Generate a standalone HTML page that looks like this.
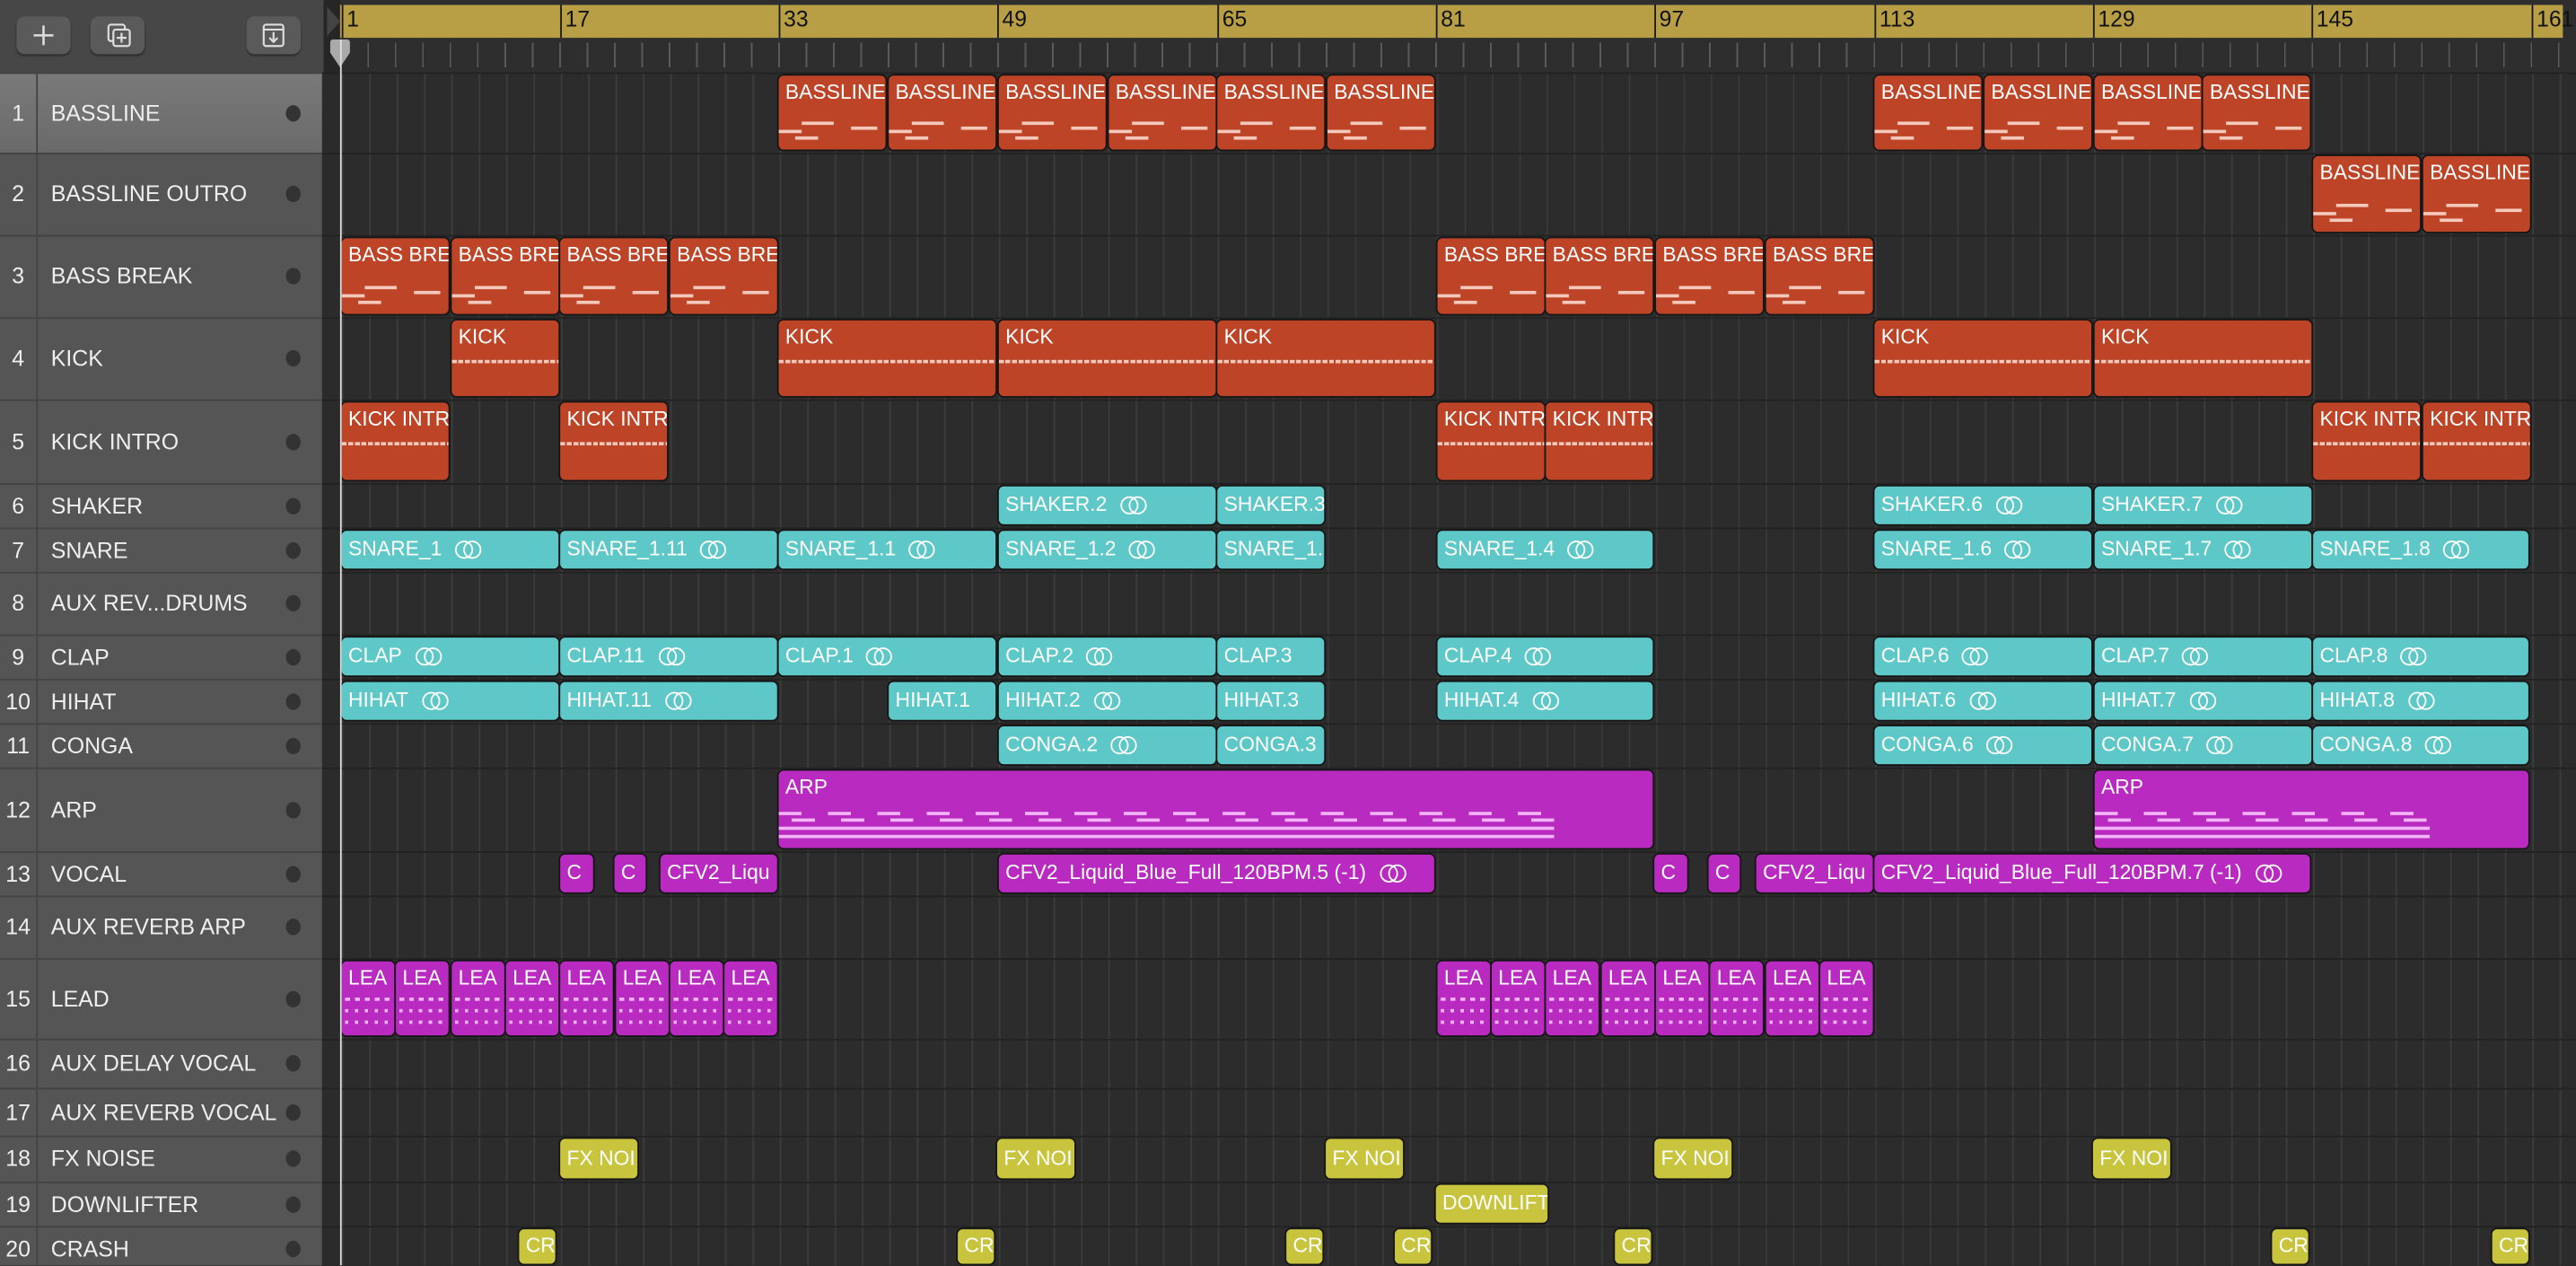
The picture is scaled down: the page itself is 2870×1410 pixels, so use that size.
<!DOCTYPE html>
<html><head><meta charset="utf-8"><style>
html,body{margin:0;padding:0;background:#2a2a2a;overflow:hidden;width:2870px;height:1410px}
#w{position:absolute;left:0;top:0;width:1568px;height:770px;transform:scale(1.830357);transform-origin:0 0;font-family:"Liberation Sans",sans-serif;background:#2b2b2b;overflow:hidden}
#top{position:absolute;left:0;top:0;width:197px;height:44px;background:#474747;border-bottom:1px solid #333}
.btn{position:absolute;top:10px;height:23px;width:33px;background:#5a5a5a;border-radius:5px;box-shadow:0 1px 1px #2e2e2e}
#ruler{position:absolute;left:197px;top:0;width:1371px;height:44px;background:#2e2e2e}
#yb{position:absolute;left:10px;top:3px;width:1353px;height:20px;background:#b89f45}
.bn{position:absolute;top:3px;height:20px;border-left:1px solid #1a1a1a;font-size:13.5px;line-height:17px;padding-left:2px;color:#111}
#ticks{position:absolute;left:10px;top:23px;width:1353px;height:21px;background:repeating-linear-gradient(90deg,#5a5a5a 0 1px,transparent 1px 16.667px);background-size:100% 15px;background-repeat:repeat-x;background-position:0 3px}
.row{position:absolute;left:0;width:1568px;box-shadow:inset 0 1px 0 #222}
.h{position:absolute;left:0;top:0;width:196px;height:100%;background:#555;color:#eee;font-size:13.6px;box-shadow:inset 0 1px 0 #444}
.h .n{position:absolute;left:0;width:22px;text-align:center;top:50%;transform:translateY(-50%)}
.h .nm{position:absolute;left:31px;top:50%;transform:translateY(-50%);white-space:nowrap}
.h .d{position:absolute;left:174px;top:50%;width:9px;height:10px;margin-top:-5px;border-radius:50%;background:#333}
.h .nl{position:absolute;left:22px;top:0;bottom:0;border-left:1px solid #444}
.ln{position:absolute;left:207px;right:5px;top:1px;bottom:0;background:#2c2c2c repeating-linear-gradient(90deg,#3b3b3b 0 1px,transparent 1px 16.667px);background-position:1px 0}
.r{position:absolute;top:1px;bottom:1px;margin-left:-1px;border:1px solid #161616;border-radius:4px;box-sizing:border-box;color:#fff;font-size:12.5px;padding:3px 0 0 4px;white-space:nowrap;overflow:hidden;line-height:14px}
.o{background:#bd4427}.c{background:#5ec7c7}.m{background:#b82ac0}.y{background:#c9c43d;color:#fff}
.c,.y,.vm{padding-top:0;display:flex;align-items:center;padding-bottom:1px}
.lp{display:inline-block;position:relative;width:17px;height:10px;margin-left:8px;vertical-align:middle}
.lp:before,.lp:after{content:"";position:absolute;top:0;width:9px;height:9px;border:1.2px solid #fff;border-radius:50%}
.lp:before{left:0}.lp:after{left:5px}
.bs:after{content:"";position:absolute;left:0;right:0;bottom:6px;height:12px;background:
linear-gradient(#f4c8ba,#f4c8ba) 0 6px/22% 2px no-repeat,
linear-gradient(#f4c8ba,#f4c8ba) 30% 1px/30% 2px no-repeat,
linear-gradient(#f4c8ba,#f4c8ba) 90% 4px/25% 2px no-repeat,
linear-gradient(#f4c8ba,#f4c8ba) 20% 10px/22% 2px no-repeat}
.kk:after{content:"";position:absolute;left:0;right:0;top:24px;height:2px;background:repeating-linear-gradient(90deg,#f4c8ba 0 3px,transparent 3px 4px)}
.ld:after{content:"";position:absolute;left:2px;right:2px;top:22px;height:17px;background:
repeating-linear-gradient(90deg,#f2b4f6 0 3px,transparent 3px 6px) 0 0/100% 2px no-repeat,
repeating-linear-gradient(90deg,#f2b4f6 0 2px,transparent 2px 6px) 0 7px/100% 2px no-repeat,
repeating-linear-gradient(90deg,#f2b4f6 0 2px,transparent 2px 6px) 0 14px/100% 2px no-repeat}
.ap:after{content:"";position:absolute;left:0;right:60px;top:25px;height:17px;background:
repeating-linear-gradient(90deg,#f2b4f6 0 14px,transparent 14px 30px) 0 0/100% 2px no-repeat,
repeating-linear-gradient(90deg,transparent 0 8px,#f2b4f6 8px 22px,transparent 22px 30px) 0 4px/100% 2px no-repeat,
linear-gradient(#f2b4f6,#f2b4f6) 0 9px/100% 2px no-repeat,
linear-gradient(#f2b4f6,#f2b4f6) 0 14px/100% 2px no-repeat}
#ph{position:absolute;left:207px;top:24px;width:1px;height:746px;background:#ddd}
</style></head><body><div id="w">
<div id="top">
<div class="btn" style="left:10px"><svg width="33" height="23"><path d="M16.5 5.5v12M10.5 11.5h12" stroke="#ddd" stroke-width="1.4"/></svg></div>
<div class="btn" style="left:55px"><svg width="33" height="23"><rect x="11" y="5" width="10" height="10" rx="1.5" fill="none" stroke="#ddd" stroke-width="1.2"/><rect x="14" y="8" width="10" height="10" rx="1.5" fill="#5a5a5a" stroke="#ddd" stroke-width="1.2"/><path d="M19 10v6M16 13h6" stroke="#ddd" stroke-width="1.2"/></svg></div>
<div class="btn" style="left:150px"><svg width="33" height="23"><rect x="10.5" y="5" width="12" height="13" rx="1.5" fill="none" stroke="#ddd" stroke-width="1.2"/><path d="M10.5 8h12M16.5 9.5v6M14 13l2.5 2.5 2.5-2.5" stroke="#ddd" stroke-width="1.2" fill="none"/></svg></div>
</div>
<div id="ruler">
<div style="position:absolute;left:0;top:0;width:10px;height:44px;background:#262626"></div>
<svg style="position:absolute;left:2px;top:4px" width="9" height="18"><path d="M0 0L8 9L0 18Z" fill="#444"/></svg>
<div id="yb"></div>
<div id="ticks"></div>
<div class="bn" style="left:11px">1</div><div class="bn" style="left:144px">17</div><div class="bn" style="left:277px">33</div><div class="bn" style="left:410px">49</div><div class="bn" style="left:544px">65</div><div class="bn" style="left:677px">81</div><div class="bn" style="left:810px">97</div><div class="bn" style="left:944px">113</div><div class="bn" style="left:1077px">129</div><div class="bn" style="left:1210px">145</div><div class="bn" style="left:1344px">161</div>
<svg style="position:absolute;left:3px;top:24px" width="14" height="18"><path d="M1 2Q1 0 3 0H11Q13 0 13 2V8L7 17L1 8Z" fill="#aaa"/></svg>
</div>

<div class="row" style="top:44px;height:49px"><div class="h" style="background:linear-gradient(#7a7a7a,#6a6a6a)"><span class="n">1</span><span class="nl"></span><span class="nm">BASSLINE</span><span class="d"></span></div><div class="ln"></div>
<div class="r o bs" style="left:474px;width:67px">BASSLINE</div><div class="r o bs" style="left:541px;width:67px">BASSLINE</div><div class="r o bs" style="left:608px;width:67px">BASSLINE</div><div class="r o bs" style="left:675px;width:67px">BASSLINE</div><div class="r o bs" style="left:741px;width:67px">BASSLINE</div><div class="r o bs" style="left:808px;width:67px">BASSLINE</div>
<div class="r o bs" style="left:1141px;width:67px">BASSLINE</div><div class="r o bs" style="left:1208px;width:67px">BASSLINE</div><div class="r o bs" style="left:1275px;width:67px">BASSLINE</div><div class="r o bs" style="left:1341px;width:67px">BASSLINE</div></div>

<div class="row" style="top:93px;height:50px"><div class="h"><span class="n">2</span><span class="nl"></span><span class="nm">BASSLINE OUTRO</span><span class="d"></span></div><div class="ln"></div>
<div class="r o bs" style="left:1408px;width:67px">BASSLINE</div><div class="r o bs" style="left:1475px;width:67px">BASSLINE</div></div>

<div class="row" style="top:143px;height:50px"><div class="h"><span class="n">3</span><span class="nl"></span><span class="nm">BASS BREAK</span><span class="d"></span></div><div class="ln"></div>
<div class="r o bs" style="left:208px;width:67px">BASS BRE</div><div class="r o bs" style="left:275px;width:67px">BASS BRE</div><div class="r o bs" style="left:341px;width:67px">BASS BRE</div><div class="r o bs" style="left:408px;width:67px">BASS BRE</div>
<div class="r o bs" style="left:875px;width:67px">BASS BRE</div><div class="r o bs" style="left:941px;width:67px">BASS BRE</div><div class="r o bs" style="left:1008px;width:67px">BASS BRE</div><div class="r o bs" style="left:1075px;width:67px">BASS BRE</div></div>

<div class="row" style="top:193px;height:50px"><div class="h"><span class="n">4</span><span class="nl"></span><span class="nm">KICK</span><span class="d"></span></div><div class="ln"></div>
<div class="r o kk" style="left:275px;width:67px">KICK</div><div class="r o kk" style="left:474px;width:134px">KICK</div><div class="r o kk" style="left:608px;width:134px">KICK</div><div class="r o kk" style="left:741px;width:134px">KICK</div><div class="r o kk" style="left:1141px;width:134px">KICK</div><div class="r o kk" style="left:1275px;width:134px">KICK</div></div>

<div class="row" style="top:243px;height:51px"><div class="h"><span class="n">5</span><span class="nl"></span><span class="nm">KICK INTRO</span><span class="d"></span></div><div class="ln"></div>
<div class="r o kk" style="left:208px;width:67px">KICK INTR</div><div class="r o kk" style="left:341px;width:67px">KICK INTR</div><div class="r o kk" style="left:875px;width:67px">KICK INTR</div><div class="r o kk" style="left:941px;width:67px">KICK INTR</div><div class="r o kk" style="left:1408px;width:67px">KICK INTR</div><div class="r o kk" style="left:1475px;width:67px">KICK INTR</div></div>

<div class="row" style="top:294px;height:27px"><div class="h"><span class="n">6</span><span class="nl"></span><span class="nm">SHAKER</span><span class="d"></span></div><div class="ln"></div>
<div class="r c" style="left:608px;width:134px">SHAKER.2<span class="lp"></span></div><div class="r c" style="left:741px;width:67px">SHAKER.3</div><div class="r c" style="left:1141px;width:134px">SHAKER.6<span class="lp"></span></div><div class="r c" style="left:1275px;width:134px">SHAKER.7<span class="lp"></span></div></div>

<div class="row" style="top:321px;height:27px"><div class="h"><span class="n">7</span><span class="nl"></span><span class="nm">SNARE</span><span class="d"></span></div><div class="ln"></div>
<div class="r c" style="left:208px;width:134px">SNARE_1<span class="lp"></span></div><div class="r c" style="left:341px;width:134px">SNARE_1.11<span class="lp"></span></div><div class="r c" style="left:474px;width:134px">SNARE_1.1<span class="lp"></span></div><div class="r c" style="left:608px;width:134px">SNARE_1.2<span class="lp"></span></div><div class="r c" style="left:741px;width:67px">SNARE_1.</div><div class="r c" style="left:875px;width:133px">SNARE_1.4<span class="lp"></span></div><div class="r c" style="left:1141px;width:134px">SNARE_1.6<span class="lp"></span></div><div class="r c" style="left:1275px;width:134px">SNARE_1.7<span class="lp"></span></div><div class="r c" style="left:1408px;width:133px">SNARE_1.8<span class="lp"></span></div></div>

<div class="row" style="top:348px;height:38px"><div class="h"><span class="n">8</span><span class="nl"></span><span class="nm">AUX REV...DRUMS</span><span class="d"></span></div><div class="ln"></div></div>

<div class="row" style="top:386px;height:27px"><div class="h"><span class="n">9</span><span class="nl"></span><span class="nm">CLAP</span><span class="d"></span></div><div class="ln"></div>
<div class="r c" style="left:208px;width:134px">CLAP<span class="lp"></span></div><div class="r c" style="left:341px;width:134px">CLAP.11<span class="lp"></span></div><div class="r c" style="left:474px;width:134px">CLAP.1<span class="lp"></span></div><div class="r c" style="left:608px;width:134px">CLAP.2<span class="lp"></span></div><div class="r c" style="left:741px;width:67px">CLAP.3</div><div class="r c" style="left:875px;width:133px">CLAP.4<span class="lp"></span></div><div class="r c" style="left:1141px;width:134px">CLAP.6<span class="lp"></span></div><div class="r c" style="left:1275px;width:134px">CLAP.7<span class="lp"></span></div><div class="r c" style="left:1408px;width:133px">CLAP.8<span class="lp"></span></div></div>

<div class="row" style="top:413px;height:27px"><div class="h"><span class="n">10</span><span class="nl"></span><span class="nm">HIHAT</span><span class="d"></span></div><div class="ln"></div>
<div class="r c" style="left:208px;width:134px">HIHAT<span class="lp"></span></div><div class="r c" style="left:341px;width:134px">HIHAT.11<span class="lp"></span></div><div class="r c" style="left:541px;width:67px">HIHAT.1</div><div class="r c" style="left:608px;width:134px">HIHAT.2<span class="lp"></span></div><div class="r c" style="left:741px;width:67px">HIHAT.3</div><div class="r c" style="left:875px;width:133px">HIHAT.4<span class="lp"></span></div><div class="r c" style="left:1141px;width:134px">HIHAT.6<span class="lp"></span></div><div class="r c" style="left:1275px;width:134px">HIHAT.7<span class="lp"></span></div><div class="r c" style="left:1408px;width:133px">HIHAT.8<span class="lp"></span></div></div>

<div class="row" style="top:440px;height:27px"><div class="h"><span class="n">11</span><span class="nl"></span><span class="nm">CONGA</span><span class="d"></span></div><div class="ln"></div>
<div class="r c" style="left:608px;width:134px">CONGA.2<span class="lp"></span></div><div class="r c" style="left:741px;width:67px">CONGA.3</div><div class="r c" style="left:1141px;width:134px">CONGA.6<span class="lp"></span></div><div class="r c" style="left:1275px;width:134px">CONGA.7<span class="lp"></span></div><div class="r c" style="left:1408px;width:133px">CONGA.8<span class="lp"></span></div></div>

<div class="row" style="top:467px;height:51px"><div class="h"><span class="n">12</span><span class="nl"></span><span class="nm">ARP</span><span class="d"></span></div><div class="ln"></div>
<div class="r m ap" style="left:474px;width:534px">ARP</div><div class="r m ap" style="left:1275px;width:266px">ARP</div></div>

<div class="row" style="top:518px;height:27px"><div class="h"><span class="n">13</span><span class="nl"></span><span class="nm">VOCAL</span><span class="d"></span></div><div class="ln"></div>
<div class="r m vm" style="left:341px;width:22px">C</div><div class="r m vm" style="left:374px;width:21px">C</div><div class="r m vm" style="left:402px;width:73px">CFV2_Liqu</div><div class="r m vm" style="left:608px;width:267px">CFV2_Liquid_Blue_Full_120BPM.5 (-1)<span class="lp"></span></div>
<div class="r m vm" style="left:1007px;width:22px">C</div><div class="r m vm" style="left:1040px;width:21px">C</div><div class="r m vm" style="left:1069px;width:73px">CFV2_Liqu</div><div class="r m vm" style="left:1141px;width:267px">CFV2_Liquid_Blue_Full_120BPM.7 (-1)<span class="lp"></span></div></div>

<div class="row" style="top:545px;height:38px"><div class="h"><span class="n">14</span><span class="nl"></span><span class="nm">AUX REVERB ARP</span><span class="d"></span></div><div class="ln"></div></div>

<div class="row" style="top:583px;height:49px"><div class="h"><span class="n">15</span><span class="nl"></span><span class="nm">LEAD</span><span class="d"></span></div><div class="ln"></div>
<div class="r m ld" style="left:208px;width:34px">LEA</div><div class="r m ld" style="left:241px;width:34px">LEA</div><div class="r m ld" style="left:275px;width:34px">LEA</div><div class="r m ld" style="left:308px;width:34px">LEA</div><div class="r m ld" style="left:341px;width:34px">LEA</div><div class="r m ld" style="left:375px;width:34px">LEA</div><div class="r m ld" style="left:408px;width:34px">LEA</div><div class="r m ld" style="left:441px;width:34px">LEA</div>
<div class="r m ld" style="left:875px;width:34px">LEA</div><div class="r m ld" style="left:908px;width:34px">LEA</div><div class="r m ld" style="left:941px;width:34px">LEA</div><div class="r m ld" style="left:975px;width:34px">LEA</div><div class="r m ld" style="left:1008px;width:34px">LEA</div><div class="r m ld" style="left:1041px;width:34px">LEA</div><div class="r m ld" style="left:1075px;width:34px">LEA</div><div class="r m ld" style="left:1108px;width:34px">LEA</div></div>

<div class="row" style="top:632px;height:30px"><div class="h"><span class="n">16</span><span class="nl"></span><span class="nm">AUX DELAY VOCAL</span><span class="d"></span></div><div class="ln"></div></div>
<div class="row" style="top:662px;height:29px"><div class="h"><span class="n">17</span><span class="nl"></span><span class="nm">AUX REVERB VOCAL</span><span class="d"></span></div><div class="ln"></div></div>

<div class="row" style="top:691px;height:28px"><div class="h"><span class="n">18</span><span class="nl"></span><span class="nm">FX NOISE</span><span class="d"></span></div><div class="ln"></div>
<div class="r y" style="left:341px;width:49px">FX NOI</div><div class="r y" style="left:607px;width:49px">FX NOI</div><div class="r y" style="left:807px;width:49px">FX NOI</div><div class="r y" style="left:1007px;width:49px">FX NOI</div><div class="r y" style="left:1274px;width:49px">FX NOI</div></div>

<div class="row" style="top:719px;height:27px"><div class="h"><span class="n">19</span><span class="nl"></span><span class="nm">DOWNLIFTER</span><span class="d"></span></div><div class="ln"></div>
<div class="r y" style="left:874px;width:70px">DOWNLIFT</div></div>

<div class="row" style="top:746px;height:30px"><div class="h" style="border-bottom-left-radius:6px"><span class="n" style="top:14px">20</span><span class="nl"></span><span class="nm" style="top:14px">CRASH</span><span class="d" style="top:14px"></span></div><div class="ln"></div>
<div class="r y" style="left:316px;width:24px;bottom:6px">CR</div><div class="r y" style="left:583px;width:24px;bottom:6px">CR</div><div class="r y" style="left:783px;width:24px;bottom:6px">CR</div><div class="r y" style="left:849px;width:24px;bottom:6px">CR</div><div class="r y" style="left:983px;width:24px;bottom:6px">CR</div><div class="r y" style="left:1383px;width:24px;bottom:6px">CR</div><div class="r y" style="left:1517px;width:24px;bottom:6px">CR</div></div>

<div id="ph"></div>
</div></body></html>
